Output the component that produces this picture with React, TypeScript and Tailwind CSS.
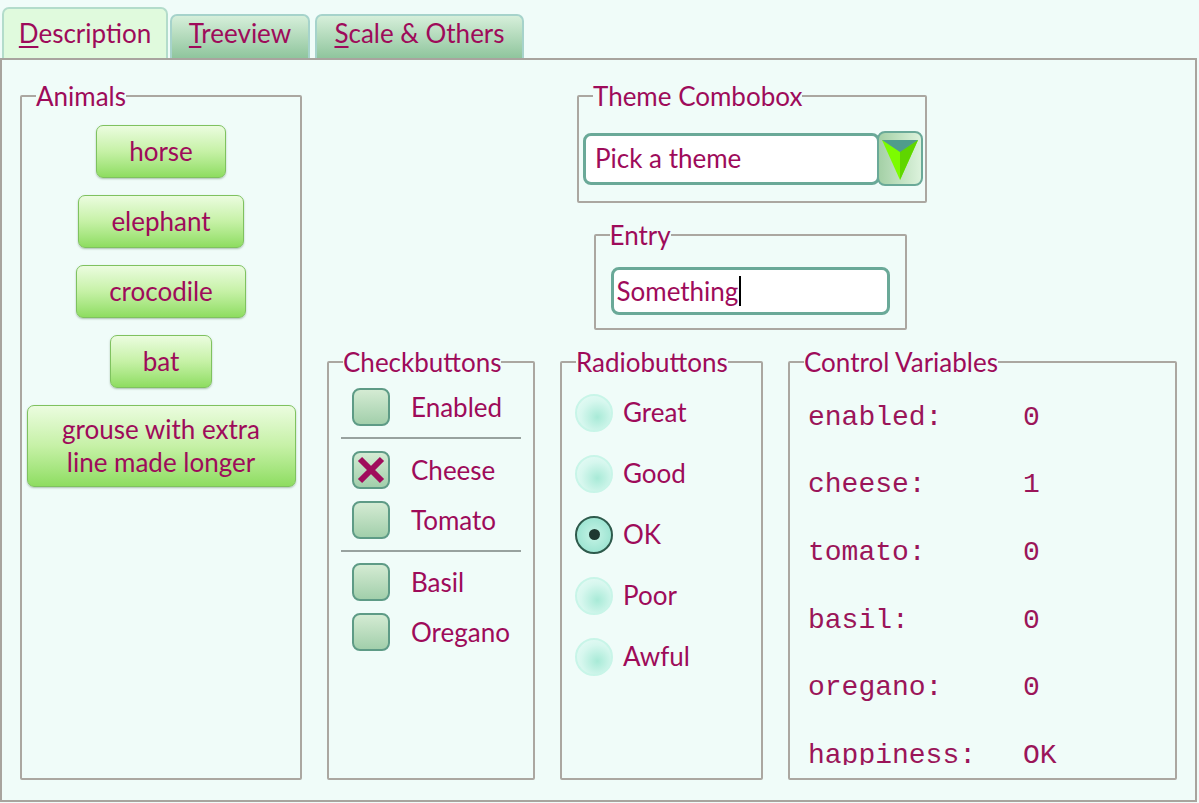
import type { ReactNode } from "react";

const font = "font-['Lato','Noto_Sans',sans-serif]";
const ink = "text-[#9e0b5a]";

function Frame({ label, className, children }: { label: string; className?: string; children: ReactNode }) {
  return (
    <fieldset className={`border-2 border-[#aba7a1] rounded-[2px] min-w-0 ${className ?? ""}`}>
      <legend className="ml-[14px] leading-[30px] text-[26px]">{label}</legend>
      {children}
    </fieldset>
  );
}

function Tab({ first, rest, active, width }: { first: string; rest: string; active?: boolean; width: string }) {
  return (
    <div
      className={`${width} flex items-end justify-center pb-[9px] rounded-t-[7px] border-2 border-b-0 leading-[31px] text-[26px] ${
        active
          ? "h-[51px] bg-[#e0fadd] border-[#b3dccb]"
          : "h-[44px] bg-linear-to-b from-[#d6efda] to-[#8fc59d] border-[#a6d3cb]"
      }`}
    >
      <span>
        <span className="underline decoration-2 underline-offset-[3px]">{first}</span>
        {rest}
      </span>
    </div>
  );
}

function AnimalButton({ children, className }: { children: ReactNode; className?: string }) {
  return (
    <button
      className={`px-[32px] rounded-[7px] border border-[#7fc25f] bg-linear-to-b from-[#ebfcdf] via-[#c6f1a6] to-[#8edd60] shadow-[0_1px_2px_rgba(40,80,40,0.35)] text-[26px] leading-[33px] ${ink} ${className ?? "h-[53px]"}`}
    >
      {children}
    </button>
  );
}

function Check({ label, checked }: { label: string; checked?: boolean }) {
  return (
    <div className="h-[50px] flex items-center pl-[23px]">
      <div className="w-[38px] h-[38px] rounded-[8px] border-2 border-[#5e9b86] bg-linear-to-b from-[#d4ebd3] to-[#a2cfab] flex items-center justify-center">
        {checked && (
          <svg width="30" height="30" viewBox="0 0 30 30">
            <path d="M4 4 L26 26 M26 4 L4 26" stroke="#a00c5c" strokeWidth="6" strokeLinecap="butt" />
          </svg>
        )}
      </div>
      <span className="ml-[21px]">{label}</span>
    </div>
  );
}

function Radio({ label, selected }: { label: string; selected?: boolean }) {
  return (
    <div className="h-[61px] flex items-center pl-[13px]">
      {selected ? (
        <div className="w-[38px] h-[38px] rounded-full border-2 border-[#2e5a4c] bg-[radial-gradient(circle_at_50%_50%,#c6f4e6_0%,#8fdfcb_100%)] flex items-center justify-center">
          <div className="w-[11px] h-[11px] rounded-full bg-[#1e3831]" />
        </div>
      ) : (
        <div className="w-[38px] h-[38px] rounded-full border-2 border-[#c8f5e8] bg-[radial-gradient(circle_at_60%_62%,#a8ead7_0%,#d6f7ee_55%,#ecfcf8_100%)]" />
      )}
      <span className="ml-[10px]">{label}</span>
    </div>
  );
}

const vars: [string, string][] = [
  ["enabled:", "0"],
  ["cheese:", "1"],
  ["tomato:", "0"],
  ["basil:", "0"],
  ["oregano:", "0"],
  ["happiness:", "OK"],
];

export default function App() {
  return (
    <div className={`w-[1199px] h-[803px] flex flex-col bg-[#f0fcf9] ${font} ${ink}`}>
      <div className="h-[58px] shrink-0 flex items-end pl-[2px] gap-[2px]">
        <Tab first="D" rest="escription" active width="w-[166px]" />
        <Tab first="T" rest="reeview" width="w-[140px]" />
        <div className="w-[1px]" />
        <Tab first="S" rest="cale & Others" width="w-[209px]" />
      </div>

      <div className="flex-1 mb-[1px] mr-[2px] border-2 border-[#a8a49e] flex gap-[25px] pl-[18px] pr-[18px] pt-[21px] pb-[20px]">
        <Frame label="Animals" className="w-[282px] shrink-0">
          <div className="flex flex-col items-center gap-[17px] pt-[14px]">
            <AnimalButton>horse</AnimalButton>
            <AnimalButton>elephant</AnimalButton>
            <AnimalButton>crocodile</AnimalButton>
            <AnimalButton>bat</AnimalButton>
            <AnimalButton className="h-[82px] w-[269px] px-0">
              grouse with extra
              <br />
              line made longer
            </AnimalButton>
          </div>
        </Frame>

        <div className="flex-1 flex flex-col">
          <Frame label="Theme Combobox" className="w-[350px] mx-auto">
            <div className="flex items-center pt-[20px] pb-[15px] pl-[4px] pr-[2px]">
              <div className="flex-1 h-[52px] bg-white border-[3px] border-[#6aa998] rounded-[8px] flex items-center pl-[9px] text-[26px]">
                Pick a theme
              </div>
              <div className="w-[46px] h-[55px] -ml-[3px] rounded-[8px] border-2 border-[#6aa998] bg-linear-to-r from-[#a4d0a6] to-[#dcf2dc] flex items-center justify-center">
                <svg width="40" height="46" viewBox="0 0 40 46">
                  <polygon points="2,4 38,4 20,44" fill="#7cfc00" />
                  <polygon points="20,15 38,4 20,44" fill="#5fd600" />
                  <polygon points="2,4 38,4 20,16" fill="#4f9c8c" />
                </svg>
              </div>
            </div>
          </Frame>

          <Frame label="Entry" className="w-[313px] mx-auto mt-[17px] -translate-x-[2px]">
            <div className="pt-[17px] pb-[13px] px-[15px]">
              <div className="h-[48px] bg-white border-[3px] border-[#6aa998] rounded-[8px] flex items-center pl-[3px] text-[26px]">
                <span>Something</span>
                <span className="w-[2px] h-[30px] bg-black ml-[1px]" />
              </div>
            </div>
          </Frame>

          <div className="flex-1 flex gap-[25px] mt-[17px]">
            <Frame label="Checkbuttons" className="w-[208px] shrink-0">
              <div className="pt-[5px] text-[26px]">
                <Check label="Enabled" />
                <div className="mx-[12px] h-[2px] bg-[#98a29f] mt-[5px] mb-[6px]" />
                <Check label="Cheese" checked />
                <Check label="Tomato" />
                <div className="mx-[12px] h-[2px] bg-[#98a29f] mt-[5px] mb-[5px]" />
                <Check label="Basil" />
                <Check label="Oregano" />
              </div>
            </Frame>

            <Frame label="Radiobuttons" className="w-[203px] shrink-0">
              <div className="pt-[5px] text-[26px]">
                <Radio label="Great" />
                <Radio label="Good" />
                <Radio label="OK" selected />
                <Radio label="Poor" />
                <Radio label="Awful" />
              </div>
            </Frame>

            <Frame label="Control Variables" className="flex-1">
              <div className="mt-[7px] h-[381px] overflow-hidden pl-[18px] font-['Liberation_Mono',monospace] text-[28px] text-[#9b1559]">
                {vars.map(([k, v]) => (
                  <div key={k} className="h-[67.6px] grid grid-cols-[215px_auto] items-center">
                    <span>{k}</span>
                    <span>{v}</span>
                  </div>
                ))}
              </div>
            </Frame>
          </div>
        </div>
      </div>
    </div>
  );
}
